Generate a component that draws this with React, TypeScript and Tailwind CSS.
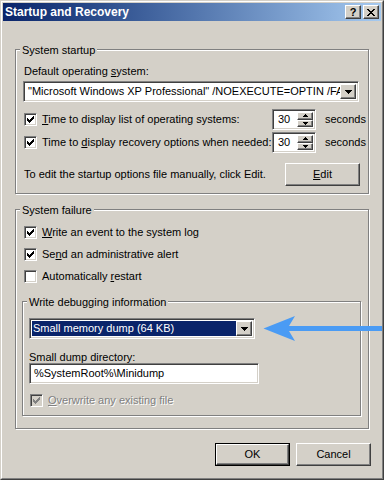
import React from "react";

const raised =
  "border border-t-white border-l-white border-r-[#404040] border-b-[#404040] shadow-[inset_-1px_-1px_0_#808080]";
const sunken =
  "border border-t-[#808080] border-l-[#808080] border-r-white border-b-white shadow-[inset_1px_1px_0_#404040,inset_-1px_-1px_0_#d4d0c8]";

function Check({ disabled }: { disabled?: boolean }) {
  return (
    <svg width="7" height="7" viewBox="0 0 7 7" shapeRendering="crispEdges" className="block">
      <path
        d="M6 0h1v1h-1z M5 1h2v1h-2z M0 2h1v1h-1z M4 2h3v1h-3z M0 3h2v1h-2z M3 3h3v1h-3z M0 4h5v1h-5z M1 5h3v1h-3z M2 6h1v1h-1z"
        fill={disabled ? "#808080" : "#000"}
      />
    </svg>
  );
}

function CheckBox({ checked, disabled }: { checked?: boolean; disabled?: boolean }) {
  return (
    <div
      className={`w-[13px] h-[13px] shrink-0 flex items-center justify-center ${sunken} ${
        disabled ? "bg-[#d4d0c8]" : "bg-white"
      }`}
    >
      {checked ? <Check disabled={disabled} /> : null}
    </div>
  );
}

function DownArrow() {
  return (
    <svg width="7" height="4" viewBox="0 0 7 4" shapeRendering="crispEdges" className="block">
      <path d="M0 0h7v1h-7z M1 1h5v1h-5z M2 2h3v1h-3z M3 3h1v1h-1z" fill="#000" />
    </svg>
  );
}

function SpinArrow({ up }: { up?: boolean }) {
  return (
    <svg width="5" height="3" viewBox="0 0 5 3" shapeRendering="crispEdges" className="block">
      {up ? (
        <path d="M2 0h1v1h-1z M1 1h3v1h-3z M0 2h5v1h-5z" fill="#000" />
      ) : (
        <path d="M0 0h5v1h-5z M1 1h3v1h-3z M2 2h1v1h-1z" fill="#000" />
      )}
    </svg>
  );
}

function GroupBox({
  label,
  className,
  children,
}: {
  label: string;
  className?: string;
  children: React.ReactNode;
}) {
  return (
    <div
      className={`relative border border-[#808080] shadow-[inset_1px_1px_0_#fff,1px_1px_0_#fff] ${className ?? ""}`}
    >
      <span className="absolute left-[4px] top-[-6px] bg-[#d4d0c8] px-[2px] leading-[13px] whitespace-nowrap">
        {label}
      </span>
      {children}
    </div>
  );
}

function Spin() {
  return (
    <div className={`w-[44px] h-[21px] bg-white flex items-stretch p-[2px] ${sunken}`}>
      <div className="flex-1 pl-[3px] flex items-center leading-[13px]">30</div>
      <div className="w-[16px] flex flex-col">
        <div className={`flex-1 bg-[#d4d0c8] flex items-center justify-center ${raised}`}>
          <SpinArrow up />
        </div>
        <div className={`flex-1 bg-[#d4d0c8] flex items-center justify-center ${raised}`}>
          <SpinArrow />
        </div>
      </div>
    </div>
  );
}

function U({ children }: { children: React.ReactNode }) {
  return <span className="underline underline-offset-[1px]">{children}</span>;
}

function Button({
  children,
  def,
  className,
}: {
  children: React.ReactNode;
  def?: boolean;
  className?: string;
}) {
  if (def) {
    return (
      <div className={`w-[75px] h-[23px] border border-black ${className ?? ""}`}>
        <div
          className={`w-full h-full flex items-center justify-center bg-[#d4d0c8] border border-t-white border-l-white border-r-[#404040] border-b-[#404040] shadow-[inset_-1px_-1px_0_#808080]`}
        >
          {children}
        </div>
      </div>
    );
  }
  return (
    <div
      className={`w-[75px] h-[23px] flex items-center justify-center bg-[#d4d0c8] ${raised} ${className ?? ""}`}
    >
      {children}
    </div>
  );
}

export default function App() {
  return (
    <div
      className="relative w-[384px] h-[480px] bg-[#d4d0c8] text-black text-[11px] leading-[13px] border border-t-[#d4d0c8] border-l-[#d4d0c8] border-r-[#404040] border-b-[#404040] overflow-hidden"
      style={{ fontFamily: "'Liberation Sans', Arial, sans-serif" }}
    >
      <div className="w-full h-full border border-t-white border-l-white border-r-[#808080] border-b-[#808080] flex flex-col">
        {/* Title bar */}
        <div className="mx-[1px] mt-[1px] h-[18px] bg-linear-to-r from-[#0a246a] to-[#a6caf0] flex items-center pl-[2px] pr-[2px]">
          <span className="text-white font-bold text-[12px] leading-[14px] whitespace-nowrap">
            Startup and Recovery
          </span>
          <div className="ml-auto flex gap-[2px]">
            <div className={`w-[16px] h-[14px] bg-[#d4d0c8] flex items-center justify-center ${raised}`}>
              <span className="font-bold text-[11px] leading-[11px]">?</span>
            </div>
            <div className={`w-[16px] h-[14px] bg-[#d4d0c8] flex items-center justify-center ${raised}`}>
              <svg width="8" height="7" viewBox="0 0 8 7" shapeRendering="crispEdges" className="block">
                <path
                  d="M0 0h2v1h-2z M6 0h2v1h-2z M1 1h2v1h-2z M5 1h2v1h-2z M2 2h4v1h-4z M3 3h2v1h-2z M2 4h4v1h-4z M1 5h2v1h-2z M5 5h2v1h-2z M0 6h2v1h-2z M6 6h2v1h-2z"
                  fill="#000"
                />
              </svg>
            </div>
          </div>
        </div>

        {/* System startup */}
        <GroupBox label="System startup" className="mt-[28px] ml-[13px] w-[354px] pl-[7px] pt-[15px] pb-[7px]">
          <div className="leading-[13px] pl-[1px]">
            Default operating <U>s</U>ystem:
          </div>
          <div className={`mt-[3px] w-[336px] h-[21px] bg-white flex items-stretch p-[2px] ${sunken}`}>
            <div className="flex-1 overflow-hidden whitespace-nowrap pl-[2px] flex items-center">
              "Microsoft Windows XP Professional" /NOEXECUTE=OPTIN /FASTDETECT
            </div>
            <div className={`w-[16px] bg-[#d4d0c8] flex items-center justify-center ${raised}`}>
              <DownArrow />
            </div>
          </div>
          <div className="mt-[7px] h-[21px] flex items-center">
            <div className="ml-[1px]">
              <CheckBox checked />
            </div>
            <div className="ml-[5px] w-[230px] whitespace-nowrap">
              <U>T</U>ime to display list of operating systems:
            </div>
            <Spin />
            <div className="ml-[9px]">seconds</div>
          </div>
          <div className="mt-[2px] h-[21px] flex items-center">
            <div className="ml-[1px]">
              <CheckBox checked />
            </div>
            <div className="ml-[5px] w-[230px] whitespace-nowrap">
              Time to <U>d</U>isplay recovery options when needed:
            </div>
            <Spin />
            <div className="ml-[9px]">seconds</div>
          </div>
          <div className="mt-[10px] flex items-center">
            <div className="pl-[1px] whitespace-nowrap">
              To edit the startup options file manually, click Edit.
            </div>
            <Button className="ml-auto mr-[8px]">
              <U>E</U>dit
            </Button>
          </div>
        </GroupBox>

        {/* System failure */}
        <GroupBox label="System failure" className="mt-[15px] ml-[13px] w-[354px] pt-[11px] pb-[12px]">
          <div className="h-[22px] flex items-center pl-[8px]">
            <CheckBox checked />
            <div className="ml-[5px]">
              <U>W</U>rite an event to the system log
            </div>
          </div>
          <div className="h-[22px] flex items-center pl-[8px]">
            <CheckBox checked />
            <div className="ml-[5px]">
              Se<U>n</U>d an administrative alert
            </div>
          </div>
          <div className="h-[22px] flex items-center pl-[8px]">
            <CheckBox />
            <div className="ml-[5px]">
              Automatically <U>r</U>estart
            </div>
          </div>

          <GroupBox
            label="Write debugging information"
            className="mt-[14px] ml-[6px] w-[339px] pt-[16px] pb-[8px] pl-[6px]"
          >
            <div className={`w-[226px] h-[21px] bg-white flex items-stretch p-[2px] ${sunken}`}>
              <div className="flex-1 bg-[#0a246a] text-white whitespace-nowrap pl-[1px] flex items-center">
                Small memory dump (64 KB)
              </div>
              <div className={`w-[16px] bg-[#d4d0c8] flex items-center justify-center ${raised}`}>
                <DownArrow />
              </div>
            </div>
            <div className="mt-[12px] leading-[12px]">Small dump directory:</div>
            <div className={`w-[230px] h-[21px] bg-white flex items-center pl-[4px] ${sunken}`}>
              %SystemRoot%\Minidump
            </div>
            <div className="mt-[10px] h-[13px] flex items-center pl-[1px]">
              <CheckBox checked disabled />
              <div className="ml-[5px] text-[#808080] [text-shadow:1px_1px_0_#fff]">
                <U>O</U>verwrite any existing file
              </div>
            </div>
          </GroupBox>
        </GroupBox>

        {/* Buttons */}
        <div className="mt-[14px] flex justify-end gap-[6px] pr-[11px]">
          <Button def>OK</Button>
          <Button>Cancel</Button>
        </div>
      </div>

      {/* Annotation arrow */}
      <svg
        className="absolute left-[262px] top-[314px]"
        width="122"
        height="27"
        viewBox="0 0 122 27"
      >
        <path d="M0.5 13.5 L32 1 L26 11 L119 11 L119 16 L26 16 L32 26 Z" fill="#4a9bf4" />
      </svg>
    </div>
  );
}
